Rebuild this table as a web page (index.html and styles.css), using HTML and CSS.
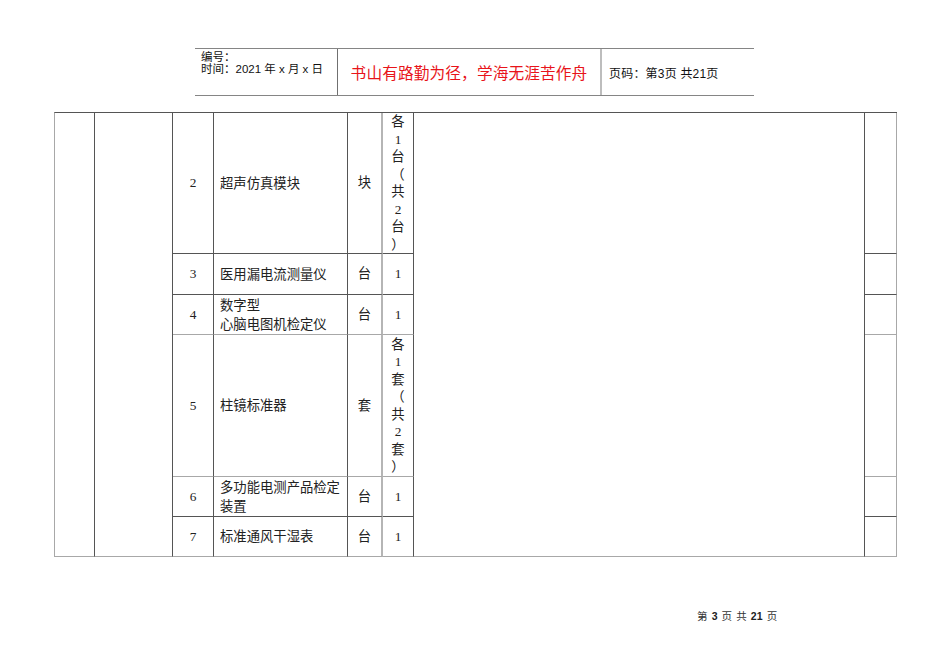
FILE: index.html
```html
<!DOCTYPE html>
<html lang="zh-CN">
<head>
<meta charset="utf-8">
<title>第3页</title>
<link rel="stylesheet" href="styles.css">
</head>
<body>
<div class="page-header">
  <div class="hd-left">
    <div class="hd-line">编号：</div>
    <div class="hd-line">时间：2021 年 x 月 x 日</div>
  </div>
  <div class="hd-mid">书山有路勤为径，学海无涯苦作舟</div>
  <div class="hd-right">页码：第3页 共21页</div>
</div>

<table class="sheet">
  <colgroup>
    <col class="c1"><col class="c2"><col class="c3"><col class="c4"><col class="c5"><col class="c6"><col class="c7"><col class="c8">
  </colgroup>
  <tr class="r-tall1">
    <td rowspan="6" class="span"></td>
    <td rowspan="6" class="span"></td>
    <td class="num">2</td>
    <td class="name">超声仿真模块</td>
    <td class="unit">块</td>
    <td class="qty stack">各<br>1<br>台<br>（<br>共<br>2<br>台<br>）</td>
    <td rowspan="6" class="span"></td>
    <td class="last"></td>
  </tr>
  <tr class="r41">
    <td class="num">3</td>
    <td class="name">医用漏电流测量仪</td>
    <td class="unit">台</td>
    <td class="qty">1</td>
    <td class="last"></td>
  </tr>
  <tr class="r40 light">
    <td class="num">4</td>
    <td class="name">数字型<br>心脑电图机检定仪</td>
    <td class="unit">台</td>
    <td class="qty">1</td>
    <td class="last"></td>
  </tr>
  <tr class="r-tall2 light">
    <td class="num">5</td>
    <td class="name">柱镜标准器</td>
    <td class="unit">套</td>
    <td class="qty stack">各<br>1<br>套<br>（<br>共<br>2<br>套<br>）</td>
    <td class="last"></td>
  </tr>
  <tr class="r40">
    <td class="num">6</td>
    <td class="name">多功能电测产品检定<br>装置</td>
    <td class="unit">台</td>
    <td class="qty">1</td>
    <td class="last"></td>
  </tr>
  <tr class="r40 light">
    <td class="num">7</td>
    <td class="name">标准通风干湿表</td>
    <td class="unit">台</td>
    <td class="qty">1</td>
    <td class="last"></td>
  </tr>
</table>

<div class="page-footer">第 <b>3</b> 页 共 <b>21</b> 页</div>
</body>
</html>
```
FILE: styles.css
```css
html, body {
  margin: 0;
  padding: 0;
  background: #fff;
}

body {
  font-family: "Liberation Serif", "Noto Sans CJK SC", serif;
  color: #222;
}

/* ---------- header ---------- */
.page-header {
  display: flex;
  margin: 48px 0 0 195px;
  width: 559px;
  height: 46px;
  border-top: 1px solid #858585;
  border-bottom: 1px solid #858585;
  font-family: "Liberation Sans", "Noto Sans CJK SC", sans-serif;
  font-size: 12px;
  line-height: 12px;
  color: #111;
}

.hd-left {
  width: 136px;
  padding: 2px 0 0 6px;
  border-right: 1px solid #707070;
  font-size: 11.5px;
}

.hd-line {
  height: 12px;
  line-height: 12px;
}

.hd-mid {
  width: 262px;
  display: flex;
  align-items: center;
  justify-content: center;
  padding-top: 1px;
  border-right: 2px solid #bdbdbd;
  color: #e8141a;
  font-family: "Noto Sans CJK SC", sans-serif;
  font-size: 15.7px;
  letter-spacing: 0.1px;
}

.hd-right {
  flex: 1;
  display: flex;
  align-items: center;
  padding: 4px 0 0 7px;
  font-size: 12px;
  letter-spacing: 0.2px;
}

/* ---------- table ---------- */
.sheet {
  margin: 16px 0 0 54px;
  border-collapse: separate;
  border-spacing: 0;
  table-layout: fixed;
  width: 843px;
  border-top: 1px solid #555;
  border-left: 1px solid #a8a8a8;
  font-size: 13.33px;
  line-height: 17.5px;
}

.c1 { width: 40px; }
.c2 { width: 78px; }
.c3 { width: 41px; }
.c4 { width: 134px; }
.c5 { width: 35px; }
.c6 { width: 31px; }
.c7 { width: 451px; }
.c8 { width: 32px; }

.sheet td {
  padding: 0;
  border-right: 1px solid #555;
  border-bottom: 1px solid #555;
  vertical-align: middle;
}

.r-tall1 { height: 141px; }
.r41 { height: 41px; }
.r40 { height: 40px; }
.r-tall2 { height: 142px; }

.sheet tr.light td { border-bottom-color: #a8a8a8; }
.sheet td.span { border-bottom-color: #a8a8a8; }

.num { text-align: center; }
.sheet td.name { padding-left: 6px; line-height: 19px; }
.sheet td.unit {
  text-align: center;
  border-right: 2px solid #b5b5b5;
}
.qty { text-align: center; }
.stack { line-height: 17.5px; }
.sheet td.last { border-right: 1px solid #a8a8a8; }

/* ---------- footer ---------- */
.page-footer {
  margin: 53px 0 0 697px;
  font-family: "Liberation Serif", "Noto Sans CJK SC", serif;
  font-size: 10.5px;
  line-height: 12px;
  color: #333;
  word-spacing: 1.5px;
}

.page-footer b {
  font-family: "Liberation Sans", sans-serif;
  font-weight: bold;
  color: #222;
}
```
